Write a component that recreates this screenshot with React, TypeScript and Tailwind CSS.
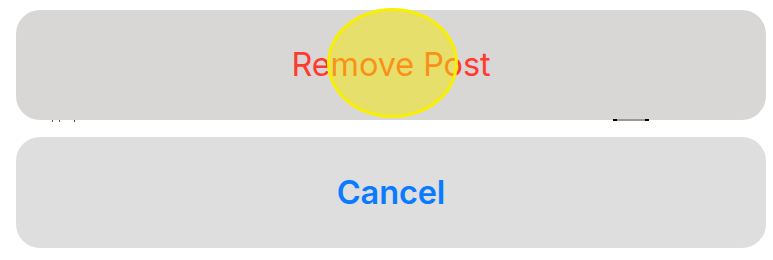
import * as React from "react"

const ActionSheet: React.FC = () => {
  return (
    <div className="relative h-[260px] w-[773px] overflow-hidden bg-white font-['Inter','Roboto',sans-serif]">
      <div className="flex flex-col gap-[17px] pl-4 pr-[7px] pt-[10px]">
        <div className="relative">
          <button className="flex h-[110px] w-full items-center justify-center rounded-[24px] bg-[#d8d7d6] text-[32.5px] font-normal tracking-[-0.1px] text-[#ff3b30]">
            Remove Post
          </button>
          {/* bits of the page peeking out below the sheet */}
          <div className="absolute left-[597px] top-[109px] h-[2px] w-[36px] bg-[#999] border-x-[4px] border-black" />
          <div className="absolute left-[36px] top-[110px] flex gap-[6px]">
            <span className="h-[2px] w-[1px] bg-[#555]" />
            <span className="h-[2px] w-[1px] bg-[#555]" />
            <span className="ml-[8px] h-[2px] w-[1px] bg-[#555]" />
          </div>
        </div>
        <button className="flex h-[111px] w-full items-center justify-center rounded-[24px] bg-[#dedede] pt-[2px] text-[32.5px] font-semibold tracking-[-0.1px] text-[#0a7aff]">
          Cancel
        </button>
      </div>
      {/* tap indicator */}
      <div className="pointer-events-none absolute left-[327px] top-[8px] h-[110px] w-[131px] rounded-[50%] border-[3px] border-[#f8f000] bg-[#f5e800]/50" />
    </div>
  )
}

export default function App() {
  return <ActionSheet />
}
